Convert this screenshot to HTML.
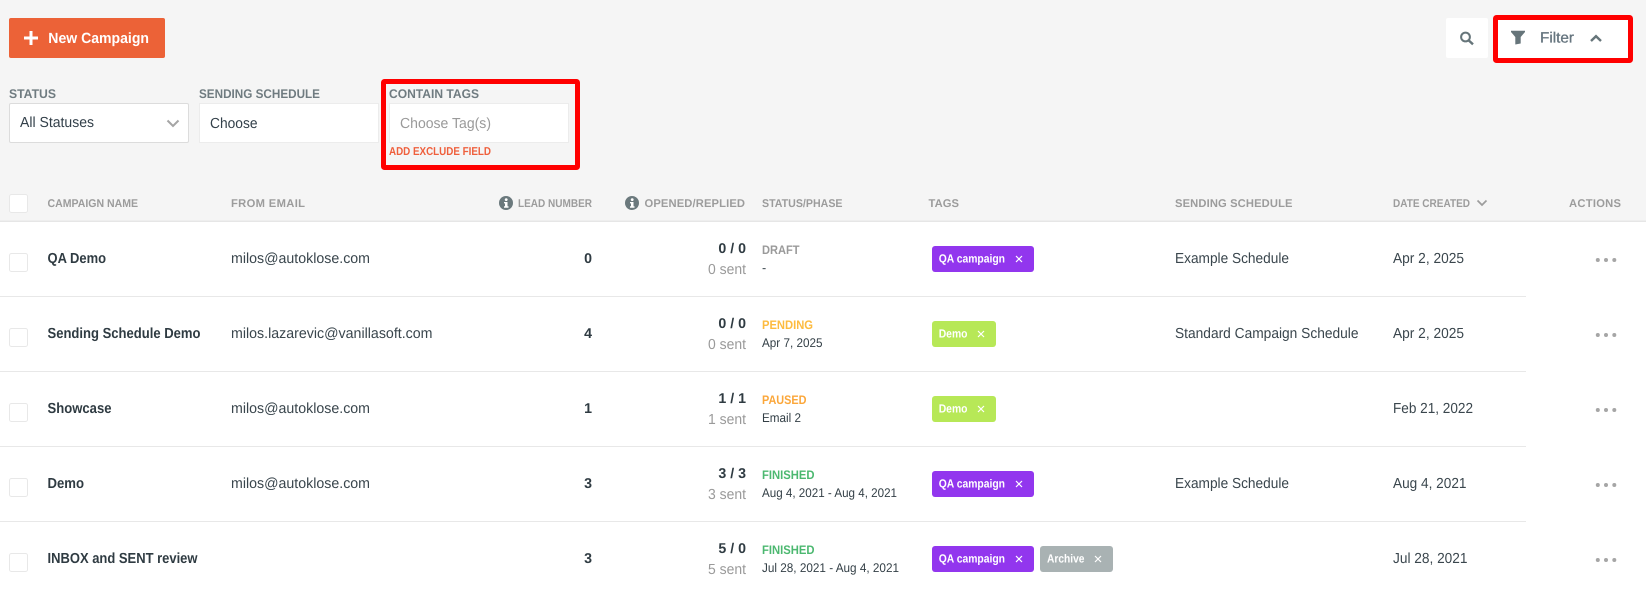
<!DOCTYPE html>
<html lang="en">
<head>
<meta charset="utf-8">
<title>Campaigns</title>
<style>
html,body{margin:0;padding:0;width:1646px;height:596px;overflow:hidden;background:#fff}
svg{display:block}
text{font-family:"Liberation Sans",Arial,sans-serif;text-rendering:geometricPrecision}
.lab{font-size:12.6px;font-weight:700;fill:#6f7b80}
.th{font-size:11.2px;font-weight:700;fill:#9c9c9c}
.name{font-size:14.6px;font-weight:700;fill:#2f3b42}
.reg{font-size:14.6px;fill:#3a464d}
.num{font-size:14.2px;font-weight:700;fill:#2f3b42}
.sent{font-size:14.6px;fill:#9a9a9a}
.st{font-size:12.4px;font-weight:700}
.sub{font-size:12.6px;fill:#333f46}
.tag{font-size:11.8px;font-weight:700;fill:#fff}
.x{stroke:#fff;stroke-width:1.2;fill:none}
.cb{fill:#fff;stroke:#e8e8e8;stroke-width:1}
.ln{fill:#e8e8e8}
.dot{fill:#a6a6a6}
.ic{fill:#6b797d}
.ii{fill:#fff}
</style>
</head>
<body>
<svg width="1646" height="596" viewBox="0 0 1646 596" xmlns="http://www.w3.org/2000/svg">
<rect width="1646" height="221" fill="#f5f5f5"/>
<rect y="221" width="1646" height="375" fill="#fff"/>
<rect y="220.500" width="1646" height="1.500" fill="#e6e6e6"/>

<!-- top bar -->
<rect x="9" y="18" width="156" height="40" rx="2" fill="#ec6237"/>
<path d="M31 31V45M24 38H38" stroke="#fff" stroke-width="3" fill="none"/>
<text x="48.300" y="43" font-size="14.8" font-weight="700" fill="#fff" textLength="100.700" lengthAdjust="spacingAndGlyphs">New Campaign</text>

<rect x="1446" y="18" width="42" height="40" rx="2" fill="#fff"/>
<circle cx="1465.500" cy="37" r="4.400" fill="none" stroke="#66757a" stroke-width="2"/>
<path d="M1468.800 40.500L1473 44.300" stroke="#66757a" stroke-width="2.400"/>

<rect x="1495.500" y="17.500" width="135" height="43" rx="1" fill="#fff" stroke="#f00" stroke-width="5"/>
<path d="M1511 30.800H1525V32L1520.700 37V43.500L1515.300 44.500V37L1511 32Z" fill="#66757a"/>
<text x="1540" y="42.700" font-size="14.8" font-weight="400" fill="#66757f" stroke="#66757f" stroke-width=".3" textLength="34" lengthAdjust="spacingAndGlyphs">Filter</text>
<path d="M1591 41L1596 36.200L1601 41" fill="none" stroke="#66757a" stroke-width="2.400"/>

<!-- filters -->
<rect x="383.500" y="81.500" width="194" height="86" rx="1" fill="none" stroke="#f00" stroke-width="5"/>
<text class="lab" x="9" y="98" textLength="47" lengthAdjust="spacingAndGlyphs">STATUS</text>
<text class="lab" x="199" y="98" textLength="121" lengthAdjust="spacingAndGlyphs">SENDING SCHEDULE</text>
<text class="lab" x="389" y="98" textLength="90" lengthAdjust="spacingAndGlyphs">CONTAIN TAGS</text>

<rect x="9.500" y="103.500" width="179" height="39" rx="1.500" fill="#fff" stroke="#dcdcdc"/>
<text x="20" y="127" font-size="14.6" fill="#33404a" textLength="74" lengthAdjust="spacingAndGlyphs">All Statuses</text>
<path d="M167.500 120.500L173 126L178.500 120.500" fill="none" stroke="#a5a5a5" stroke-width="2"/>

<rect x="199.500" y="103.500" width="179" height="39" fill="#fff" stroke="#ececec"/>
<text x="210" y="128" font-size="14.6" fill="#33404a" textLength="47.500" lengthAdjust="spacingAndGlyphs">Choose</text>

<rect x="389.500" y="103.500" width="179" height="39" fill="#fff" stroke="#ececec"/>
<text x="400" y="128" font-size="14.6" fill="#9a9a9a" textLength="91" lengthAdjust="spacingAndGlyphs">Choose Tag(s)</text>
<text x="389" y="155" font-size="11.4" font-weight="700" fill="#ef5f3c" textLength="102" lengthAdjust="spacingAndGlyphs">ADD EXCLUDE FIELD</text>

<!-- table head -->
<rect class="cb" x="9.500" y="194.500" width="18" height="18" rx="2"/>
<text class="th" x="47.500" y="207" textLength="90.500" lengthAdjust="spacingAndGlyphs">CAMPAIGN NAME</text>
<text class="th" x="231" y="207" textLength="74" lengthAdjust="spacing">FROM EMAIL</text>
<circle class="ic" cx="506" cy="203" r="7"/>
<circle class="ii" cx="506.200" cy="199.600" r="1.400"/>
<path class="ii" d="M504 202H507.500V206.300H508.500V207.700H504V206.300H505V203.400H504Z"/>
<text class="th" x="518" y="207" textLength="74" lengthAdjust="spacingAndGlyphs">LEAD NUMBER</text>
<circle class="ic" cx="632" cy="203" r="7"/>
<circle class="ii" cx="632.200" cy="199.600" r="1.400"/>
<path class="ii" d="M630 202H633.500V206.300H634.500V207.700H630V206.300H631V203.400H630Z"/>
<text class="th" x="644.500" y="207" textLength="100.500" lengthAdjust="spacing">OPENED/REPLIED</text>
<text class="th" x="762" y="207" textLength="80.500" lengthAdjust="spacingAndGlyphs">STATUS/PHASE</text>
<text class="th" x="928.500" y="207" textLength="30.500" lengthAdjust="spacing">TAGS</text>
<text class="th" x="1175" y="207" textLength="117.500" lengthAdjust="spacing">SENDING SCHEDULE</text>
<text class="th" x="1393" y="207" textLength="77" lengthAdjust="spacingAndGlyphs">DATE CREATED</text>
<path d="M1477.500 200.500L1482 205L1486.500 200.500" fill="none" stroke="#9c9c9c" stroke-width="1.700"/>
<text class="th" x="1569" y="207" textLength="52" lengthAdjust="spacing">ACTIONS</text>

<!-- row lines -->
<rect class="ln" x="0" y="296" width="1526" height="1"/>
<rect class="ln" x="0" y="371" width="1526" height="1"/>
<rect class="ln" x="0" y="446" width="1526" height="1"/>
<rect class="ln" x="0" y="521" width="1526" height="1"/>

<!-- row 1 -->
<rect class="cb" x="9.500" y="253.500" width="18" height="18" rx="2"/>
<text class="name" x="47.500" y="263" textLength="58.500" lengthAdjust="spacingAndGlyphs">QA Demo</text>
<text class="reg" x="231" y="263" textLength="139" lengthAdjust="spacingAndGlyphs">milos@autoklose.com</text>
<text class="num" x="592" y="263" text-anchor="end">0</text>
<text class="num" x="718.400" y="253" textLength="27.600" lengthAdjust="spacingAndGlyphs">0 / 0</text>
<text class="sent" x="708" y="274" textLength="38" lengthAdjust="spacingAndGlyphs">0 sent</text>
<text class="st" x="762" y="254" fill="#9a9a9a" textLength="37.500" lengthAdjust="spacingAndGlyphs">DRAFT</text>
<text class="sub" x="762" y="272">-</text>
<rect x="932" y="246" width="102" height="26" rx="3" fill="#9236ee"/>
<text class="tag" x="938.700" y="262.300" textLength="66.300" lengthAdjust="spacingAndGlyphs">QA campaign</text>
<path class="x" d="M1016 256L1022 262M1022 256L1016 262"/>
<text class="reg" x="1175" y="262.800" textLength="114" lengthAdjust="spacingAndGlyphs">Example Schedule</text>
<text class="reg" x="1393" y="262.800" textLength="71" lengthAdjust="spacingAndGlyphs">Apr 2, 2025</text>
<circle class="dot" cx="1597.800" cy="260" r="2"/><circle class="dot" cx="1606" cy="260" r="2"/><circle class="dot" cx="1614.300" cy="260" r="2"/>

<!-- row 2 -->
<rect class="cb" x="9.500" y="328.500" width="18" height="18" rx="2"/>
<text class="name" x="47.500" y="338" textLength="153" lengthAdjust="spacingAndGlyphs">Sending Schedule Demo</text>
<text class="reg" x="231" y="338" textLength="201.500" lengthAdjust="spacingAndGlyphs">milos.lazarevic@vanillasoft.com</text>
<text class="num" x="592" y="338" text-anchor="end">4</text>
<text class="num" x="718.400" y="328" textLength="27.600" lengthAdjust="spacingAndGlyphs">0 / 0</text>
<text class="sent" x="708" y="349" textLength="38" lengthAdjust="spacingAndGlyphs">0 sent</text>
<text class="st" x="762" y="329" fill="#fdbb3f" textLength="51" lengthAdjust="spacingAndGlyphs">PENDING</text>
<text class="sub" x="762" y="347" textLength="60.500" lengthAdjust="spacingAndGlyphs">Apr 7, 2025</text>
<rect x="932" y="321" width="64" height="26" rx="3" fill="#b7e857"/>
<text class="tag" x="938.700" y="337.300" textLength="28.800" lengthAdjust="spacingAndGlyphs">Demo</text>
<path class="x" d="M978 331L984 337M984 331L978 337"/>
<text class="reg" x="1175" y="337.800" textLength="183.500" lengthAdjust="spacingAndGlyphs">Standard Campaign Schedule</text>
<text class="reg" x="1393" y="337.800" textLength="71" lengthAdjust="spacingAndGlyphs">Apr 2, 2025</text>
<circle class="dot" cx="1597.800" cy="335" r="2"/><circle class="dot" cx="1606" cy="335" r="2"/><circle class="dot" cx="1614.300" cy="335" r="2"/>

<!-- row 3 -->
<rect class="cb" x="9.500" y="403.500" width="18" height="18" rx="2"/>
<text class="name" x="47.500" y="413" textLength="64" lengthAdjust="spacingAndGlyphs">Showcase</text>
<text class="reg" x="231" y="413" textLength="139" lengthAdjust="spacingAndGlyphs">milos@autoklose.com</text>
<text class="num" x="592" y="413" text-anchor="end">1</text>
<text class="num" x="718.400" y="403" textLength="27.600" lengthAdjust="spacingAndGlyphs">1 / 1</text>
<text class="sent" x="708" y="424" textLength="38" lengthAdjust="spacingAndGlyphs">1 sent</text>
<text class="st" x="762" y="404" fill="#fba73b" textLength="44.500" lengthAdjust="spacingAndGlyphs">PAUSED</text>
<text class="sub" x="762" y="422" textLength="39" lengthAdjust="spacingAndGlyphs">Email 2</text>
<rect x="932" y="396" width="64" height="26" rx="3" fill="#b7e857"/>
<text class="tag" x="938.700" y="412.300" textLength="28.800" lengthAdjust="spacingAndGlyphs">Demo</text>
<path class="x" d="M978 406L984 412M984 406L978 412"/>
<text class="reg" x="1393" y="412.800" textLength="80" lengthAdjust="spacingAndGlyphs">Feb 21, 2022</text>
<circle class="dot" cx="1597.800" cy="410" r="2"/><circle class="dot" cx="1606" cy="410" r="2"/><circle class="dot" cx="1614.300" cy="410" r="2"/>

<!-- row 4 -->
<rect class="cb" x="9.500" y="478.500" width="18" height="18" rx="2"/>
<text class="name" x="47.500" y="488" textLength="36.500" lengthAdjust="spacingAndGlyphs">Demo</text>
<text class="reg" x="231" y="488" textLength="139" lengthAdjust="spacingAndGlyphs">milos@autoklose.com</text>
<text class="num" x="592" y="488" text-anchor="end">3</text>
<text class="num" x="718.400" y="478" textLength="27.600" lengthAdjust="spacingAndGlyphs">3 / 3</text>
<text class="sent" x="708" y="499" textLength="38" lengthAdjust="spacingAndGlyphs">3 sent</text>
<text class="st" x="762" y="479" fill="#4cb870" textLength="52.500" lengthAdjust="spacingAndGlyphs">FINISHED</text>
<text class="sub" x="762" y="497" textLength="135" lengthAdjust="spacingAndGlyphs">Aug 4, 2021 - Aug 4, 2021</text>
<rect x="932" y="471" width="102" height="26" rx="3" fill="#9236ee"/>
<text class="tag" x="938.700" y="487.300" textLength="66.300" lengthAdjust="spacingAndGlyphs">QA campaign</text>
<path class="x" d="M1016 481L1022 487M1022 481L1016 487"/>
<text class="reg" x="1175" y="487.800" textLength="114" lengthAdjust="spacingAndGlyphs">Example Schedule</text>
<text class="reg" x="1393" y="487.800" textLength="73.500" lengthAdjust="spacingAndGlyphs">Aug 4, 2021</text>
<circle class="dot" cx="1597.800" cy="485" r="2"/><circle class="dot" cx="1606" cy="485" r="2"/><circle class="dot" cx="1614.300" cy="485" r="2"/>

<!-- row 5 -->
<rect class="cb" x="9.500" y="553.500" width="18" height="18" rx="2"/>
<text class="name" x="47.500" y="563" textLength="150" lengthAdjust="spacingAndGlyphs">INBOX and SENT review</text>
<text class="num" x="592" y="563" text-anchor="end">3</text>
<text class="num" x="718.400" y="553" textLength="27.600" lengthAdjust="spacingAndGlyphs">5 / 0</text>
<text class="sent" x="708" y="574" textLength="38" lengthAdjust="spacingAndGlyphs">5 sent</text>
<text class="st" x="762" y="554" fill="#4cb870" textLength="52.500" lengthAdjust="spacingAndGlyphs">FINISHED</text>
<text class="sub" x="762" y="572" textLength="137" lengthAdjust="spacingAndGlyphs">Jul 28, 2021 - Aug 4, 2021</text>
<rect x="932" y="546" width="102" height="26" rx="3" fill="#9236ee"/>
<text class="tag" x="938.700" y="562.300" textLength="66.300" lengthAdjust="spacingAndGlyphs">QA campaign</text>
<path class="x" d="M1016 556L1022 562M1022 556L1016 562"/>
<rect x="1040" y="546" width="73" height="26" rx="3" fill="#a9b2b3"/>
<text class="tag" x="1047" y="562.300" textLength="37.500" lengthAdjust="spacingAndGlyphs">Archive</text>
<path class="x" d="M1095 556L1101 562M1101 556L1095 562"/>
<text class="reg" x="1393" y="562.800" textLength="74.500" lengthAdjust="spacingAndGlyphs">Jul 28, 2021</text>
<circle class="dot" cx="1597.800" cy="560" r="2"/><circle class="dot" cx="1606" cy="560" r="2"/><circle class="dot" cx="1614.300" cy="560" r="2"/>
</svg>
</body>
</html>
